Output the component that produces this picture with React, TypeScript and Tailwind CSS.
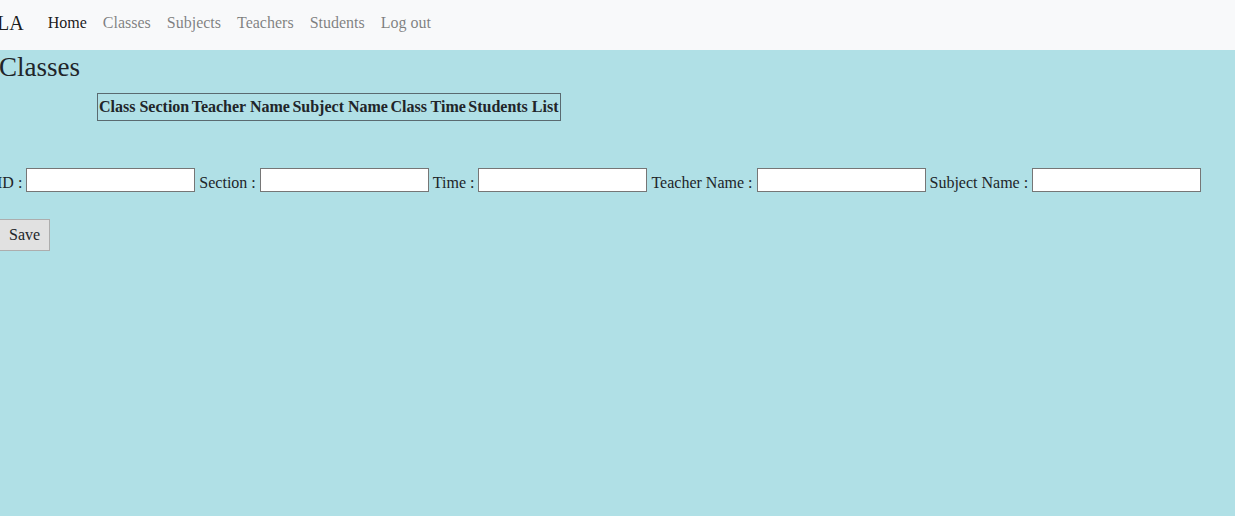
import React from 'react'

const links = ['Classes', 'Subjects', 'Teachers', 'Students', 'Log out']
const headers = ['Class Section', 'Teacher Name', 'Subject Name', 'Class Time', 'Students List']
const fields = ['ID', 'Section', 'Time', 'Teacher Name', 'Subject Name']

export default function App() {
  return (
    <div className="min-h-[516px] w-[1235px] overflow-hidden bg-[#b0e0e6] font-['Liberation_Serif',serif] text-[16px] text-[#212529]">
      {/* Navbar */}
      <nav className="flex h-[50px] items-center bg-[#f8f9fa] pb-[5px]">
        <span className="ml-[-3px] mr-[16px] text-[20px] leading-none text-black/90">LA</span>
        <a className="px-[8px] text-black/90">Home</a>
        {links.map((l) => (
          <a key={l} className="px-[8px] text-black/50">
            {l}
          </a>
        ))}
      </nav>

      <div className="ml-[-1px]">
        <h3 className="mt-[3px] text-[27px] leading-[28px]">Classes</h3>

        <table className="mt-[12px] ml-[98px] w-[464px] border border-[#5a6a70] border-collapse">
          <thead>
            <tr>
              {headers.map((h) => (
                <th key={h} className="px-[1px] py-[4px] text-left font-bold leading-[18px]">
                  {h}
                </th>
              ))}
            </tr>
          </thead>
        </table>

        <div className="mt-[43px] ml-[-2px] flex items-center whitespace-pre">
          {fields.map((f) => (
            <React.Fragment key={f}>
              <span className="pt-[7px]">{f} : </span>
              <input className="h-[24px] w-[169px] border border-[#767676] bg-white" />
              <span> </span>
            </React.Fragment>
          ))}
        </div>

        <button className="mt-[24px] h-[32px] border border-[#adadad] bg-[#e1e1e1] px-[9px] text-[16px]">
          Save
        </button>
      </div>
    </div>
  )
}
